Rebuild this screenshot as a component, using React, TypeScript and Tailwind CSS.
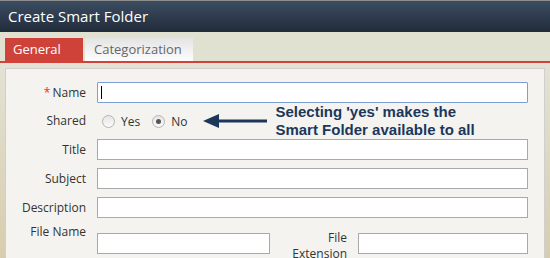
import React from 'react';

const label = "text-[12px] text-[#333] text-right w-[80px] shrink-0 leading-[16px]";
const input = "h-[21px] border border-[#a9a9a9] bg-white";

function Radio({ checked, text }: { checked?: boolean; text: string }) {
  return (
    <div className="flex items-center gap-[6px] mr-[12px]">
      <span className="w-[13px] h-[13px] rounded-full border border-[#b4b4b4] bg-gradient-to-b from-[#e6e6e6] to-[#fbfbfb] flex items-center justify-center">
        {checked && <span className="w-[5px] h-[5px] rounded-full bg-[#555]" />}
      </span>
      <span className="text-[12px] text-[#333]">{text}</span>
    </div>
  );
}

export default function App() {
  return (
    <div className="w-[550px] h-[258px] overflow-hidden font-['Open_Sans',sans-serif]">
      {/* header */}
      <div className="border-t border-[#8d8d8d] h-[32px] bg-gradient-to-b from-[#3c4d62] to-[#212c3a] flex items-center pl-[8px]">
        <h1 className="text-[15px] text-white">Create Smart Folder</h1>
      </div>

      {/* tabs */}
      <div className="bg-[#e1e1d1] pt-[6px] pl-[5px] flex gap-[2px] items-end h-[29px]">
        <div className="bg-[#cf4239] text-white text-[13px] w-[78px] h-[23px] pl-[8px] leading-[23px]">General</div>
        <div className="bg-gradient-to-b from-[#e4e4e4] to-[#fdfdfd] text-[#666] text-[13px] w-[108px] h-[23px] pl-[9px] leading-[23px]">
          Categorization
        </div>
      </div>
      <div className="h-[2px] bg-[#d0423a]" />

      {/* body */}
      <div className="bg-gradient-to-b from-[#e3e2d4] to-[#d6caa9] pt-[5px] px-[5px]">
        <div className="bg-[#f4f3ef] border border-[#cfcfcf] pt-[13px] pb-[20px]">
          <div className="flex items-center h-[21px]">
            <div className={label}>
              <span className="text-[#e8302b] mr-[2px]">*</span>Name
            </div>
            <div className="ml-[11px] w-[431px] h-[21px] border border-[#7d9fd6] bg-white rounded-[1px] flex items-center pl-[3px]">
              <span className="w-px h-[13px] bg-black" />
            </div>
          </div>

          <div className="flex items-center h-[36px]">
            <div className={label}>Shared</div>
            <div className="ml-[16px] flex items-center pt-[1px]">
              <Radio text="Yes" />
              <Radio checked text="No" />
            </div>
            <svg width="64" height="16" viewBox="0 0 64 16" className="ml-[4px]">
              <path d="M12 8H64" stroke="#1b375c" strokeWidth="3" />
              <path d="M0 8L16 1V15Z" fill="#1b375c" />
            </svg>
            <p className="ml-[8px] font-['Liberation_Sans',Arial,sans-serif] font-bold text-[15px] leading-[18px] text-[#1b375c]">
              Selecting 'yes' makes the
              <br />
              Smart Folder available to all
            </p>
          </div>

          <div className="flex flex-col gap-[8px]">
            {['Title', 'Subject', 'Description'].map((t) => (
              <div key={t} className="flex items-center h-[21px]">
                <div className={label}>{t}</div>
                <div className={`ml-[11px] w-[431px] ${input}`} />
              </div>
            ))}
          </div>

          <div className="flex items-start mt-[15px]">
            <div className={`${label} -mt-[9px]`}>File Name</div>
            <div className={`ml-[11px] w-[173px] ${input}`} />
            <div className="w-[77px] shrink-0 text-[12px] text-[#333] text-right leading-[16px] -mt-[3px]">
              File
              <br />
              Extension
            </div>
            <div className={`ml-[11px] w-[170px] ${input}`} />
          </div>
        </div>
      </div>
    </div>
  );
}
